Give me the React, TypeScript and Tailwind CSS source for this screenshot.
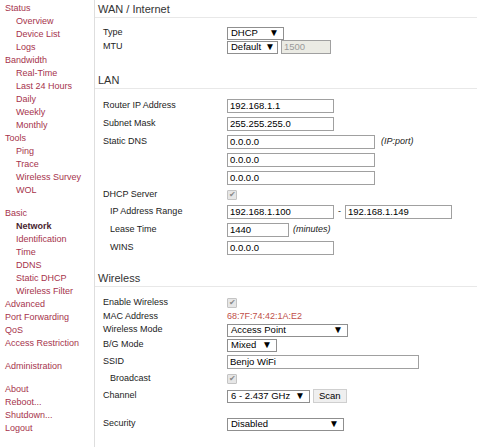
import React from 'react';

const font = { fontFamily: '"Liberation Sans", Arial, sans-serif' };

type NavItem = { label: string; sub?: boolean; active?: boolean; gap?: boolean };

const nav: NavItem[] = [
  { label: 'Status' },
  { label: 'Overview', sub: true },
  { label: 'Device List', sub: true },
  { label: 'Logs', sub: true },
  { label: 'Bandwidth' },
  { label: 'Real-Time', sub: true },
  { label: 'Last 24 Hours', sub: true },
  { label: 'Daily', sub: true },
  { label: 'Weekly', sub: true },
  { label: 'Monthly', sub: true },
  { label: 'Tools' },
  { label: 'Ping', sub: true },
  { label: 'Trace', sub: true },
  { label: 'Wireless Survey', sub: true },
  { label: 'WOL', sub: true },
  { label: 'Basic', gap: true },
  { label: 'Network', sub: true, active: true },
  { label: 'Identification', sub: true },
  { label: 'Time', sub: true },
  { label: 'DDNS', sub: true },
  { label: 'Static DHCP', sub: true },
  { label: 'Wireless Filter', sub: true },
  { label: 'Advanced' },
  { label: 'Port Forwarding' },
  { label: 'QoS' },
  { label: 'Access Restriction' },
  { label: 'Administration', gap: true },
  { label: 'About', gap: true },
  { label: 'Reboot...' },
  { label: 'Shutdown...' },
  { label: 'Logout' },
];

const Select: React.FC<{ value: string; w: string }> = ({ value, w }) => (
  <span className={`${w} h-[13px] border border-[#8f8f8f] bg-white flex items-center justify-between gap-[4px] pl-[3px] pr-[4px] text-[9.5px] leading-none text-black whitespace-nowrap`}>
    <span>{value}</span>
    <span className="text-[10px]">▼</span>
  </span>
);

const Input: React.FC<{ value: string; w: string; readOnly?: boolean }> = ({ value, w, readOnly }) => (
  <span
    className={`${w} h-[14px] border border-[#a0a0a0] flex items-center pl-[2px] text-[9.5px] leading-none whitespace-nowrap ${
      readOnly ? 'bg-[#ebebe4] text-[#9a9a9a]' : 'bg-white text-black'
    }`}
  >
    {value}
  </span>
);

const Check = () => (
  <span className="w-[10px] h-[10px] rounded-[1px] border border-[#c4c4c4] bg-[#e6e6e6] flex items-center justify-center text-[8px] leading-none text-[#8a8a8a]">
    ✔
  </span>
);

const Row: React.FC<{ label: string; h: string; indent?: boolean; children?: React.ReactNode }> = ({
  label,
  h,
  indent,
  children,
}) => (
  <div className={`flex items-center ${h}`}>
    <div className={`w-[124px] shrink-0 ${indent ? 'pl-[7px]' : ''} text-[#1c1c1c]`}>{label}</div>
    <div className="flex items-center gap-[3px]">{children}</div>
  </div>
);

const Heading: React.FC<{ title: string; className?: string }> = ({ title, className }) => (
  <div className={`pl-[3px] border-b border-[#e8e8e8] h-[17px] text-[11px] leading-[16px] text-[#333] ${className ?? ''}`}>
    {title}
  </div>
);

export default function App() {
  return (
    <div className="flex w-[477px] h-[447px] bg-white text-[9px] overflow-hidden" style={font}>
      <aside className="w-[95px] shrink-0 border-r border-[#dedede] pt-[2px]">
        {nav.map((item) => (
          <div
            key={item.label}
            className={`h-[13px] leading-[13px] whitespace-nowrap ${item.sub ? 'pl-[16px]' : 'pl-[5px]'} ${
              item.gap ? 'mt-[10px]' : ''
            } ${item.active ? 'font-bold text-[#4a2530]' : 'text-[#a6334c]'}`}
          >
            {item.label}
          </div>
        ))}
      </aside>

      <main className="flex-1 pt-[1px]">
        <Heading title="WAN / Internet" />
        <div className="pl-[8px] mt-[8px]">
          <Row label="Type" h="h-[14px]">
            <Select value="DHCP" w="w-[57px]" />
          </Row>
          <Row label="MTU" h="h-[14px]">
            <Select value="Default" w="w-[51px]" />
            <Input value="1500" w="w-[50px]" readOnly />
          </Row>
        </div>

        <Heading title="LAN" className="mt-[18px]" />
        <div className="pl-[8px] mt-[8px]">
          <Row label="Router IP Address" h="h-[18px]">
            <Input value="192.168.1.1" w="w-[107px]" />
          </Row>
          <Row label="Subnet Mask" h="h-[18px]">
            <Input value="255.255.255.0" w="w-[107px]" />
          </Row>
          <Row label="Static DNS" h="h-[18px]">
            <Input value="0.0.0.0" w="w-[148px]" />
            <span className="ml-[3px] italic text-[#1c1c1c]">(IP:port)</span>
          </Row>
          <Row label="" h="h-[18px]">
            <Input value="0.0.0.0" w="w-[148px]" />
          </Row>
          <Row label="" h="h-[18px]">
            <Input value="0.0.0.0" w="w-[148px]" />
          </Row>
          <Row label="DHCP Server" h="h-[16px]">
            <Check />
          </Row>
          <Row label="IP Address Range" h="h-[18px]" indent>
            <Input value="192.168.1.100" w="w-[107px]" />
            <span className="px-[1px] text-[#1c1c1c]">-</span>
            <Input value="192.168.1.149" w="w-[107px]" />
          </Row>
          <Row label="Lease Time" h="h-[18px]" indent>
            <Input value="1440" w="w-[62px]" />
            <span className="ml-[1px] italic text-[#1c1c1c]">(minutes)</span>
          </Row>
          <Row label="WINS" h="h-[18px]" indent>
            <Input value="0.0.0.0" w="w-[107px]" />
          </Row>
        </div>

        <Heading title="Wireless" className="mt-[13px]" />
        <div className="pl-[8px] mt-[9px]">
          <Row label="Enable Wireless" h="h-[14px]">
            <Check />
          </Row>
          <Row label="MAC Address" h="h-[13px]">
            <span className="text-[#c0504a]">68:7F:74:42:1A:E2</span>
          </Row>
          <Row label="Wireless Mode" h="h-[14px]">
            <Select value="Access Point" w="w-[121px]" />
          </Row>
          <Row label="B/G Mode" h="h-[16px]">
            <Select value="Mixed" w="w-[50px]" />
          </Row>
          <Row label="SSID" h="h-[18px]">
            <Input value="Benjo WiFi" w="w-[192px]" />
          </Row>
          <Row label="Broadcast" h="h-[16px]" indent>
            <Check />
          </Row>
          <Row label="Channel" h="h-[18px]">
            <Select value="6 - 2.437 GHz" w="w-[83px]" />
            <span className="h-[14px] px-[5px] flex items-center border border-[#cfcfcf] bg-[#efefef] text-[9.5px] leading-none text-black">
              Scan
            </span>
          </Row>
          <div className="h-[10px]" />
          <Row label="Security" h="h-[18px]">
            <Select value="Disabled" w="w-[117px]" />
          </Row>
        </div>
      </main>
    </div>
  );
}
